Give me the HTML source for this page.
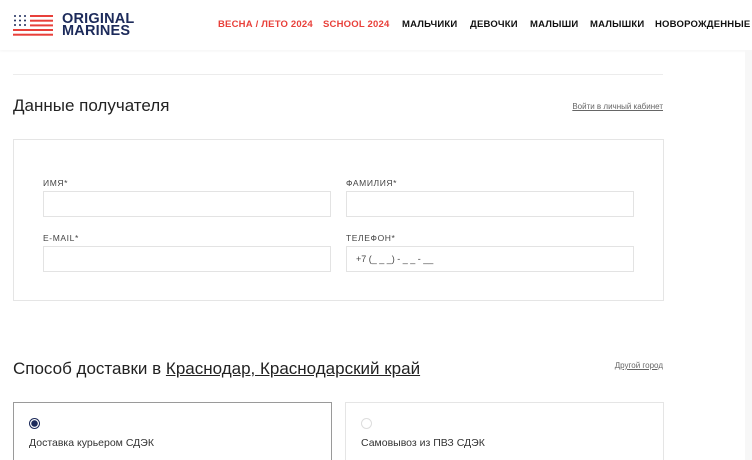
<!DOCTYPE html>
<html><head><meta charset="utf-8"><style>
*{margin:0;padding:0;box-sizing:border-box}
html,body{width:752px;height:460px;overflow:hidden}
body{background:#fff;font-family:"Liberation Sans",sans-serif;position:relative;color:#222}
.hdr{position:absolute;left:0;top:0;width:752px;height:50px;background:#fff;box-shadow:0 1px 3px rgba(0,0,0,.05)}
.logo{position:absolute;left:62px;top:14px;font-weight:bold;font-size:14.5px;line-height:11.5px;color:#1c2a5a;letter-spacing:.2px}
.nav{position:absolute;top:19px;font-weight:bold;font-size:9.5px;white-space:nowrap;letter-spacing:.2px}
.a{position:absolute}
.hr{left:13px;top:74px;width:650px;height:1px;background:#ececec}
h2{position:absolute;font-weight:normal;font-size:17px;color:#222;white-space:nowrap}
.lnk{position:absolute;font-size:8px;color:#666;text-decoration:underline;white-space:nowrap;text-align:right}
.box{position:absolute;border:1px solid #e5e5e5}
.lbl{position:absolute;font-size:8.5px;letter-spacing:.6px;color:#444}
.inp{position:absolute;border:1px solid #e3e3e3;height:26px;width:288px}
.card{position:absolute;top:402px;height:70px;width:319px}
.rad{position:absolute;left:15px;top:15px;width:11px;height:11px;border-radius:50%}
.ct{position:absolute;left:15px;top:34px;font-size:10.5px;color:#333}
.sb{position:absolute;left:745px;top:50px;width:7px;height:410px;background:#f7f7f7}
</style></head><body>
<div class="hdr">
<svg style="position:absolute;left:13px;top:15px" width="40" height="21" viewBox="0 0 40 21">
<g fill="#e8403a"><rect x="17" y="0" width="23" height="2"/><rect x="17" y="4.7" width="23" height="2"/><rect x="17" y="9.4" width="23" height="2"/><rect x="0" y="14" width="40" height="2"/><rect x="0" y="18.7" width="40" height="2"/></g>
<g fill="#1c2a5a"><circle cx="2" cy="1" r="1"/><circle cx="7" cy="1" r="1"/><circle cx="12" cy="1" r="1"/><circle cx="2" cy="5.5" r="1"/><circle cx="7" cy="5.5" r="1"/><circle cx="12" cy="5.5" r="1"/><circle cx="2" cy="10" r="1"/><circle cx="7" cy="10" r="1"/><circle cx="12" cy="10" r="1"/></g>
</svg>
<div class="logo">ORIGINAL<br>MARINES</div>
<div class="nav" style="left:218px;color:#e8403a">ВЕСНА / ЛЕТО 2024</div>
<div class="nav" style="left:323px;color:#e8403a">SCHOOL 2024</div>
<div class="nav" style="left:402px;color:#111">МАЛЬЧИКИ</div>
<div class="nav" style="left:470px;color:#111">ДЕВОЧКИ</div>
<div class="nav" style="left:530px;color:#111">МАЛЫШИ</div>
<div class="nav" style="left:590px;color:#111">МАЛЫШКИ</div>
<div class="nav" style="left:655px;color:#111">НОВОРОЖДЕННЫЕ</div>
</div>
<div class="a hr"></div>
<h2 style="left:13px;top:96px">Данные получателя</h2>
<div class="lnk" style="right:89px;top:102px">Войти в личный кабинет</div>
<div class="box" style="left:13px;top:139px;width:651px;height:162px"></div>
<div class="lbl" style="left:43px;top:178px">ИМЯ*</div>
<div class="lbl" style="left:346px;top:178px">ФАМИЛИЯ*</div>
<div class="inp" style="left:43px;top:191px"></div>
<div class="inp" style="left:346px;top:191px"></div>
<div class="lbl" style="left:43px;top:233px">E-MAIL*</div>
<div class="lbl" style="left:346px;top:233px">ТЕЛЕФОН*</div>
<div class="inp" style="left:43px;top:246px"></div>
<div class="inp" style="left:346px;top:246px"><span style="position:absolute;left:9px;top:7px;font-size:9px;color:#444">+7 (_ _ _) - _ _ - __</span></div>
<h2 style="left:13px;top:359px">Способ доставки в <span style="text-decoration:underline">Краснодар, Краснодарский край</span></h2>
<div class="lnk" style="right:89px;top:361px">Другой город</div>
<div class="card" style="left:13px;border:1px solid #9a9a9a"><div class="rad" style="border:1px solid #1c2a5a;background:radial-gradient(circle,#1c2a5a 3px,#fff 3.5px)"></div><div class="ct">Доставка курьером СДЭК</div></div>
<div class="card" style="left:345px;border:1px solid #e5e5e5"><div class="rad" style="border:1px solid #ddd"></div><div class="ct">Самовывоз из ПВЗ СДЭК</div></div>
<div class="sb"></div>
</body></html>
